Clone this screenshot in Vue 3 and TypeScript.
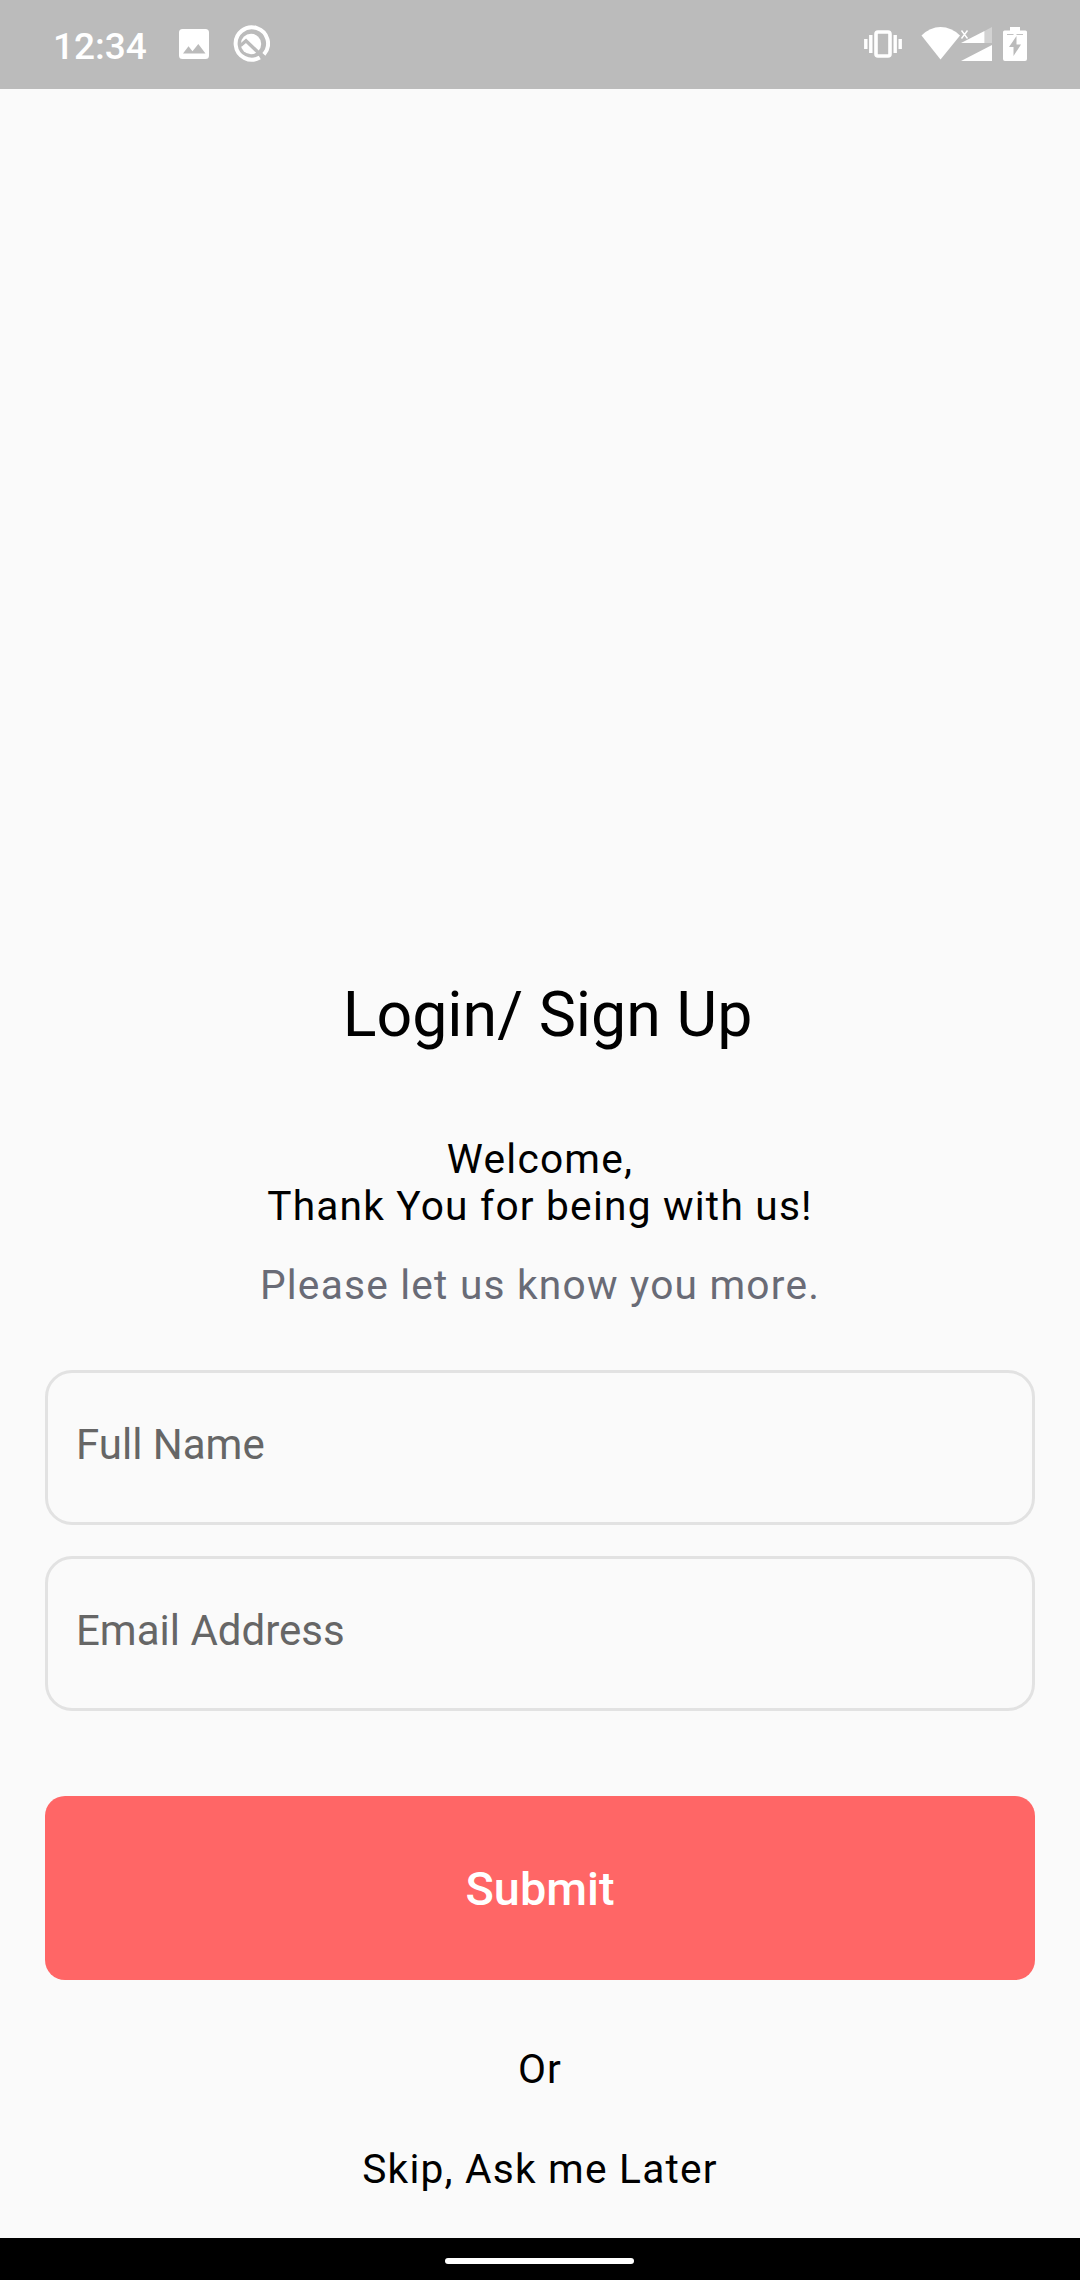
<script setup lang="ts">
import { ref } from 'vue'

const fullName = ref('')
const email = ref('')
</script>

<template>
  <div class="screen">
    <header class="status">
      <span class="clock">12:34</span>
      <svg class="picture" width="30" height="30" viewBox="0 0 30 30">
        <path fill="#fff" fill-rule="evenodd" d="M3.500 0H26.500A3.500 3.500 0 0 1 30 3.500V26.500A3.500 3.500 0 0 1 26.500 30H3.500A3.500 3.500 0 0 1 0 26.500V3.500A3.500 3.500 0 0 1 3.500 0ZM4 24.500H26.500L19.300 15L13.500 22.200L9.500 17.300Z" />
      </svg>
      <svg class="badge-q" width="38" height="38" viewBox="0 0 38 38">
        <path d="M31.900 29.300A16.200 16.200 0 1 0 27.800 32.600" fill="none" stroke="#fff" stroke-width="4" />
        <circle cx="19" cy="19" r="10.200" fill="#fff" />
        <path d="M8.500 20.500L14 15.800L32.500 33.500" fill="none" stroke="#bbb" stroke-width="3.400" />
      </svg>
      <span class="gap"></span>
      <svg class="vibrate" width="38" height="28" viewBox="0 0 38 28">
        <rect x="12" y="2" width="14" height="24" rx="2" fill="none" stroke="#fff" stroke-width="3.600" />
        <path d="M1.800 9V19M6.800 5V23M31.200 5V23M36.200 9V19" stroke="#fff" stroke-width="3.400" fill="none" />
      </svg>
      <svg class="radio" width="74" height="36" viewBox="0 0 74 36">
        <path d="M0.500 9.500Q9 1 19.500 1Q30.500 1 39 9.500L19.500 33.500Z" fill="#fff" />
        <path d="M40 17L63.500 5V17Z" fill="#fff" />
        <path d="M63.500 5L71 1V17H63.500Z" fill="#fff" opacity="0.350" />
        <path d="M40 35L71 19V35Z" fill="#fff" />
        <path d="M40.500 4.500L46.500 12.500M46.500 4.500L40.500 12.500" stroke="#fff" stroke-width="1.400" />
      </svg>
      <svg class="battery" width="24" height="34" viewBox="0 0 24 34">
        <path d="M7 0H17V3.500H22.500Q24 3.500 24 5V32Q24 34 22 34H2Q0 34 0 32V5Q0 3.500 1.500 3.500H7Z" fill="#fff" />
        <path d="M4 7.500H10.500M13.500 7.500H20" stroke="#bbb" stroke-width="0.900" />
        <path d="M13.500 9L6 20H10.500V29L18 17.500H13.500Z" fill="#bbb" />
      </svg>
    </header>

    <main class="content">
      <h1 class="title">Login/ Sign Up</h1>
      <p class="welcome">Welcome,<br />Thank You for being with us!</p>
      <p class="hint">Please let us know you more.</p>
      <form class="form" @submit.prevent>
        <input v-model="fullName" class="field" type="text" placeholder="Full Name" />
        <input v-model="email" class="field" type="email" placeholder="Email Address" />
        <button class="submit" type="submit">Submit</button>
      </form>
      <p class="or">Or</p>
      <a class="skip">Skip, Ask me Later</a>
    </main>

    <footer class="nav"><span class="pill"></span></footer>
  </div>
</template>

<style>
body {
  margin: 0;
  background: #fafafa;
}
</style>

<style scoped>
.screen {
  display: flex;
  flex-direction: column;
  width: 1080px;
  height: 2280px;
  overflow: hidden;
  background: #fafafa;
  color: #000;
  font-family: Roboto, 'Liberation Sans', sans-serif;
}

.status {
  display: flex;
  flex: none;
  align-items: center;
  box-sizing: border-box;
  height: 89px;
  padding: 0 53px 0 53px;
  background: #bbb;
}

.status svg {
  margin-bottom: 1px;
}

.clock {
  width: 94px;
  margin-top: 3px;
  color: #fff;
  font-size: 37px;
  font-weight: 500;
  white-space: nowrap;
}

.picture {
  margin-left: 32px;
}

.badge-q {
  margin-left: 23px;
}

.gap {
  flex: 1;
}

.radio {
  margin-left: 19px;
}

.battery {
  margin-left: 8px;
}

.content {
  display: flex;
  flex: 1;
  flex-direction: column;
  align-items: center;
  padding: 0 45px;
}

.title {
  margin: 889px 0 0;
  padding-left: 15px;
  font-size: 62.700px;
  font-weight: 400;
  line-height: 74px;
}

.welcome,
.hint,
.or,
.skip {
  margin: 0;
  font-size: 40.700px;
  font-weight: 400;
  line-height: 47px;
  letter-spacing: 1.200px;
  text-align: center;
}

.welcome {
  margin-top: 84px;
}

.hint {
  margin-top: 32px;
  color: #696b76;
}

.form {
  display: flex;
  flex-direction: column;
  width: 990px;
  margin-top: 61px;
}

.field {
  box-sizing: border-box;
  width: 100%;
  height: 155px;
  margin: 0 0 31px;
  padding: 0 28px 6px;
  border: 3px solid #e2e2e2;
  border-radius: 27px;
  outline: none;
  background: transparent;
  color: #000;
  font: 400 42px Roboto, 'Liberation Sans', sans-serif;
}

.field::placeholder {
  color: #666;
  opacity: 1;
}

.submit {
  height: 184px;
  margin: 54px 0 0;
  padding: 1px 0 0;
  border: 0;
  border-radius: 20px;
  background: #f66;
  color: #fff;
  font: 500 46.800px Roboto, 'Liberation Sans', sans-serif;
}

.or {
  margin-top: 66px;
}

.skip {
  margin-top: 53px;
}

.nav {
  display: flex;
  flex: none;
  justify-content: center;
  height: 42px;
  background: #000;
}

.pill {
  width: 189px;
  height: 6px;
  margin-top: 20px;
  margin-right: 1px;
  border-radius: 3px;
  background: #fff;
}
</style>
